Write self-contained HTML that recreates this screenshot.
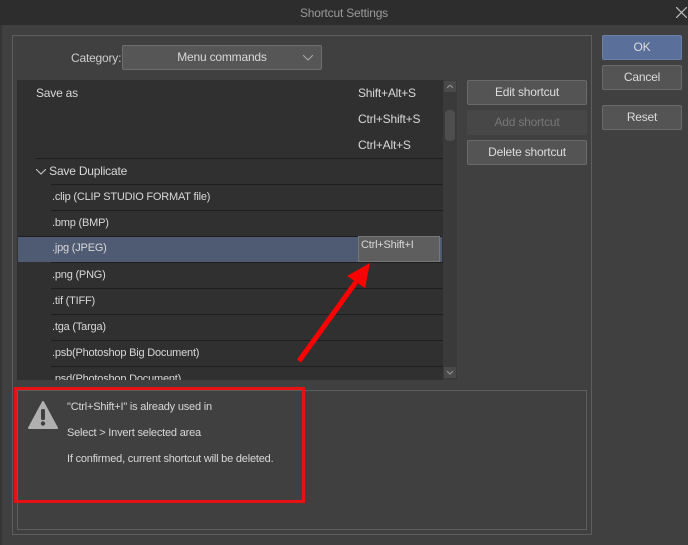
<!DOCTYPE html>
<html><head><style>
*{margin:0;padding:0;box-sizing:border-box}
body{width:688px;height:545px;background:#404040;font-family:"Liberation Sans",sans-serif;font-size:12px;color:#d8d8d8;position:relative;overflow:hidden;letter-spacing:-0.2px}
.a{position:absolute}
.btn{position:absolute;background:#545454;border:1px solid #6a6a6a;border-radius:2px;text-align:center;line-height:22px;color:#dcdcdc}
.row{position:absolute;left:51px;width:392px;height:26px;border-top:1px solid #1e1e1e;line-height:25px;padding-left:1px;font-size:11px}
</style></head><body>
<div class="a" style="left:0;top:0;width:688px;height:25px;background:#2d2d2d"></div>
<div class="a" style="left:0;top:6px;width:688px;text-align:center;color:#9a9a9a;font-size:12px">Shortcut Settings</div>
<svg class="a" style="left:676px;top:7px" width="11" height="11"><path d="M0 0L11 11M11 0L0 11" stroke="#bbb" stroke-width="1.2"/></svg>
<div class="a" style="left:0;top:25px;width:2px;height:520px;background:#353535"></div>
<div class="a" style="left:12px;top:35px;width:580px;height:500px;border:1px solid #5e5e5e"></div>
<div class="a" style="left:71px;top:51px;color:#ccc">Category:</div>
<div class="a" style="left:122px;top:45px;width:200px;height:25px;background:#565656;border:1px solid #6e6e6e;border-radius:2px;line-height:23px;text-align:center;color:#d8d8d8">Menu commands<svg class="a" style="right:8px;top:9px" width="10" height="6"><path d="M0 0L5 5L10 0" fill="none" stroke="#aaa"/></svg></div>
<div class="a" style="left:17px;top:80px;width:440px;height:300px;background:#303030;overflow:hidden">
 <div class="a" style="left:19px;top:6px">Save as</div>
 <div class="a" style="left:341px;top:6px">Shift+Alt+S</div>
 <div class="a" style="left:341px;top:32px">Ctrl+Shift+S</div>
 <div class="a" style="left:341px;top:58px">Ctrl+Alt+S</div>
 <div class="a" style="left:19px;top:78px;width:407px;height:26px;border-top:1px solid #1e1e1e;line-height:25px"><svg style="vertical-align:middle" width="10" height="6"><path d="M0 0L5 5L10 0" fill="none" stroke="#ccc"/></svg> Save Duplicate</div>
 <div class="row" style="left:34px;top:104px">.clip (CLIP STUDIO FORMAT file)</div>
 <div class="row" style="left:34px;top:130px">.bmp (BMP)</div>
 <div class="a" style="left:1px;top:156px;width:424px;height:26px;background:#4f5a73;border-top:1px solid #1e1e1e"></div>
 <div class="row" style="left:34px;top:156px;border:none">.jpg (JPEG)</div>
 <div class="a" style="left:341px;top:156px;width:82px;height:26px;background:#5e5e5e;border:1px solid #777;padding:2px 2px;font-size:11px">Ctrl+Shift+I</div>
 <div class="row" style="left:34px;top:182px">.png (PNG)</div>
 <div class="row" style="left:34px;top:208px">.tif (TIFF)</div>
 <div class="row" style="left:34px;top:234px">.tga (Targa)</div>
 <div class="row" style="left:34px;top:260px">.psb(Photoshop Big Document)</div>
 <div class="row" style="left:34px;top:286px">.psd(Photoshop Document)</div>
 <div class="a" style="left:426px;top:0;width:14px;height:300px;background:#3a3a3a"></div>
 <div class="a" style="left:427px;top:1px;width:12px;height:11px;background:#4a4a4a"><svg class="a" style="left:3px;top:4px" width="6" height="4"><path d="M0 3L3 0L6 3" fill="none" stroke="#999"/></svg></div>
 <div class="a" style="left:428px;top:30px;width:10px;height:31px;background:#4e4e4e;border-radius:4px"></div>
 <div class="a" style="left:427px;top:287px;width:12px;height:11px;background:#4a4a4a"><svg class="a" style="left:3px;top:4px" width="6" height="4"><path d="M0 0L3 3L6 0" fill="none" stroke="#999"/></svg></div>
</div>
<div class="btn" style="left:467px;top:80px;width:120px;height:25px">Edit shortcut</div>
<div class="btn" style="left:467px;top:110px;width:120px;height:25px;background:#474747;border-color:#474747;color:#777">Add shortcut</div>
<div class="btn" style="left:467px;top:140px;width:120px;height:25px">Delete shortcut</div>
<div class="btn" style="left:602px;top:35px;width:80px;height:25px;background:#5a6f9a;border-color:#6a7faa">OK</div>
<div class="btn" style="left:602px;top:65px;width:80px;height:25px">Cancel</div>
<div class="btn" style="left:602px;top:105px;width:80px;height:25px">Reset</div>
<div class="a" style="left:17px;top:390px;width:570px;height:140px;border:1px solid #5e5e5e"></div>
<svg class="a" style="left:28px;top:401px" width="30" height="28" viewBox="0 0 30 28"><path d="M15 1 L29 27 L1 27 Z" fill="#b0b0b0" stroke="#b0b0b0" stroke-linejoin="round" stroke-width="2"/><rect x="13" y="8" width="4" height="11" rx="1.5" fill="#404040"/><circle cx="15" cy="22.5" r="2.2" fill="#404040"/></svg>
<div class="a" style="left:67px;top:401px;font-size:11px">"Ctrl+Shift+I" is already used in</div>
<div class="a" style="left:67px;top:427px;font-size:11px">Select &gt; Invert selected area</div>
<div class="a" style="left:67px;top:453px;font-size:11px">If confirmed, current shortcut will be deleted.</div>
<div class="a" style="left:14px;top:387px;width:291px;height:116px;border:3px solid #e81010"></div>
<svg class="a" style="left:0;top:0" width="688" height="545"><line x1="299" y1="361" x2="356" y2="282" stroke="#f00" stroke-width="5"/><path d="M370 263 L347 276 L365 288 Z" fill="#f00"/></svg>
</body></html>
